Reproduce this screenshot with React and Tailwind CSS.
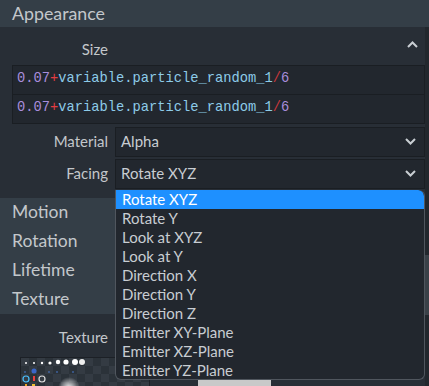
import React from "react";

const ui = { fontFamily: "Lato, 'Open Sans', sans-serif" };
const mono = { fontFamily: "'Liberation Mono', 'DejaVu Sans Mono', monospace" };

const options = [
  "Rotate XYZ",
  "Rotate Y",
  "Look at XYZ",
  "Look at Y",
  "Direction X",
  "Direction Y",
  "Direction Z",
  "Emitter XY-Plane",
  "Emitter XZ-Plane",
  "Emitter YZ-Plane",
];

const Chevron = ({ up }) => (
  <svg width="11" height="7" viewBox="0 0 11 7" className="shrink-0">
    <polyline
      points={up ? "1,6 5.5,1.5 10,6" : "1,1 5.5,5.5 10,1"}
      fill="none"
      stroke="#c9ced3"
      strokeWidth="2"
    />
  </svg>
);

const Expr = () => (
  <div
    className="h-[30px] border border-[#1a1e23] bg-[#22272e] flex items-center pl-[4px] text-[13.75px] -mt-px first:mt-0"
    style={mono}
  >
    <span className="text-[#a98ddc]">0.07</span>
    <span className="text-[#e23c42]">+</span>
    <span className="text-[#8dcbe8]">variable.particle_random_1</span>
    <span className="text-[#c7373c]">/</span>
    <span className="text-[#a98ddc]">6</span>
  </div>
);

const SelectRow = ({ label, value }) => (
  <div className="flex items-center h-[30px]">
    <div className="w-[108px] text-right text-[15px] text-[#c3c7cb]">{label}</div>
    <div className="ml-[7px] flex-1 h-[30px] bg-[#22272e] border border-[#1a1e23] flex items-center justify-between pl-[5px] pr-[8px] text-[15px] text-[#c8cdd2]">
      <span>{value}</span>
      <Chevron />
    </div>
  </div>
);

const TextureSheet = () => (
  <svg width="128" height="30" viewBox="0 0 128 30" className="block">
    <defs>
      <pattern id="chk" width="16" height="16" patternUnits="userSpaceOnUse">
        <rect width="16" height="16" fill="#2b3239" />
        <rect width="8" height="8" fill="#343b43" />
        <rect x="8" y="8" width="8" height="8" fill="#343b43" />
      </pattern>
      <radialGradient id="glow">
        <stop offset="0" stopColor="#ffffff" stopOpacity="0.95" />
        <stop offset="1" stopColor="#ffffff" stopOpacity="0" />
      </radialGradient>
    </defs>
    <rect width="128" height="30" fill="url(#chk)" />
    <circle cx="5" cy="5" r="1" fill="#fff" />
    <circle cx="13" cy="5" r="1" fill="#fff" />
    <circle cx="21" cy="5" r="1.2" fill="#fff" />
    <circle cx="29" cy="5" r="1.6" fill="#fff" />
    <circle cx="37" cy="4" r="2.2" fill="#fff" />
    <circle cx="45" cy="4" r="2.6" fill="#fff" />
    <circle cx="54" cy="4" r="3" fill="#fff" />
    <circle cx="61" cy="4" r="3" fill="#eee" />
    <circle cx="4" cy="14" r="0.8" fill="#4a80e0" />
    <circle cx="13" cy="13" r="2.5" fill="#3a66c8" />
    <circle cx="28" cy="14" r="0.8" fill="#4a80e0" />
    <circle cx="36" cy="14" r="0.8" fill="#4a80e0" />
    <circle cx="52" cy="14" r="0.8" fill="#4a80e0" />
    <circle cx="5" cy="21" r="3" fill="none" stroke="#4ac0ff" strokeWidth="1.2" />
    <rect x="12" y="18" width="2" height="5" fill="#e84040" />
    <circle cx="21" cy="21" r="3" fill="none" stroke="#ddd" strokeWidth="1.2" />
    <rect x="4" y="26" width="2" height="4" fill="#e8a020" />
    <rect x="11" y="26" width="3" height="4" fill="#f0c030" />
    <circle cx="48" cy="30" r="11" fill="url(#glow)" />
  </svg>
);

export default function App() {
  return (
    <div className="w-[429px] h-[386px] overflow-hidden relative bg-[#282e36] flex" style={ui}>
      <div className="flex-1 flex flex-col">
        <div className="h-[27px] bg-[#343e47] pl-[12px] flex items-center text-[17.8px] text-[#c3c7cb]">
          Appearance
        </div>
        <div className="flex flex-col pl-[12px] pt-[3px] pb-[9px]">
          <div className="h-[35px] flex items-center pt-[5px]">
            <div className="w-[96px] text-right text-[15px] text-[#c3c7cb]">Size</div>
            <div className="flex-1" />
            <div className="pr-[7px] -mt-[10px]">
              <Chevron up />
            </div>
          </div>
          <div className="flex flex-col">
            <Expr />
            <Expr />
          </div>
          <div className="flex flex-col gap-[2px] mt-[3px] -ml-[12px]">
            <SelectRow label="Material" value="Alpha" />
            <SelectRow label="Facing" value="Rotate XYZ" />
          </div>
        </div>
        <div className="bg-[#343e47] flex flex-col text-[17.5px] text-[#c3c7cb]">
          {["Motion", "Rotation", "Lifetime", "Texture"].map((s) => (
            <div key={s} className="h-[29px] flex items-center pl-[12px]">
              {s}
            </div>
          ))}
        </div>
        <div className="flex flex-col">
          <div className="h-[43px] flex items-center pt-[5px]">
            <div className="w-[108px] text-right text-[15px] text-[#c3c7cb]">Texture</div>
          </div>
          <div className="flex items-start">
            <div className="ml-[20px] border border-[#1c2026]">
              <TextureSheet />
            </div>
            <div className="ml-[48px] mt-[22px] w-[73px] h-[10px] bg-[#c9c9c9]" />
          </div>
        </div>
      </div>
      <div className="w-[4px] flex flex-col">
        <div className="h-[27px] bg-[#343e47]" />
        <div className="h-[228px] bg-[#22272d]" />
        <div className="h-[60px] bg-[#3a4148]" />
        <div className="flex-1 bg-[#22272d]" />
      </div>

      <div className="absolute left-[115px] top-[190px] w-[310px] h-[190px] bg-[#22272e] border border-[#50565e] border-t-0 rounded-[6px] rounded-tl-none overflow-hidden flex flex-col text-[15px] text-[#c8cdd2]">
        {options.map((o, i) => (
          <div
            key={o}
            className={
              i === 0
                ? "h-[19px] shrink-0 flex items-center pl-[6px] bg-[#1e90ff] text-white rounded-tr-[6px]"
                : "h-[19px] shrink-0 flex items-center pl-[6px]"
            }
          >
            {o}
          </div>
        ))}
      </div>
    </div>
  );
}
